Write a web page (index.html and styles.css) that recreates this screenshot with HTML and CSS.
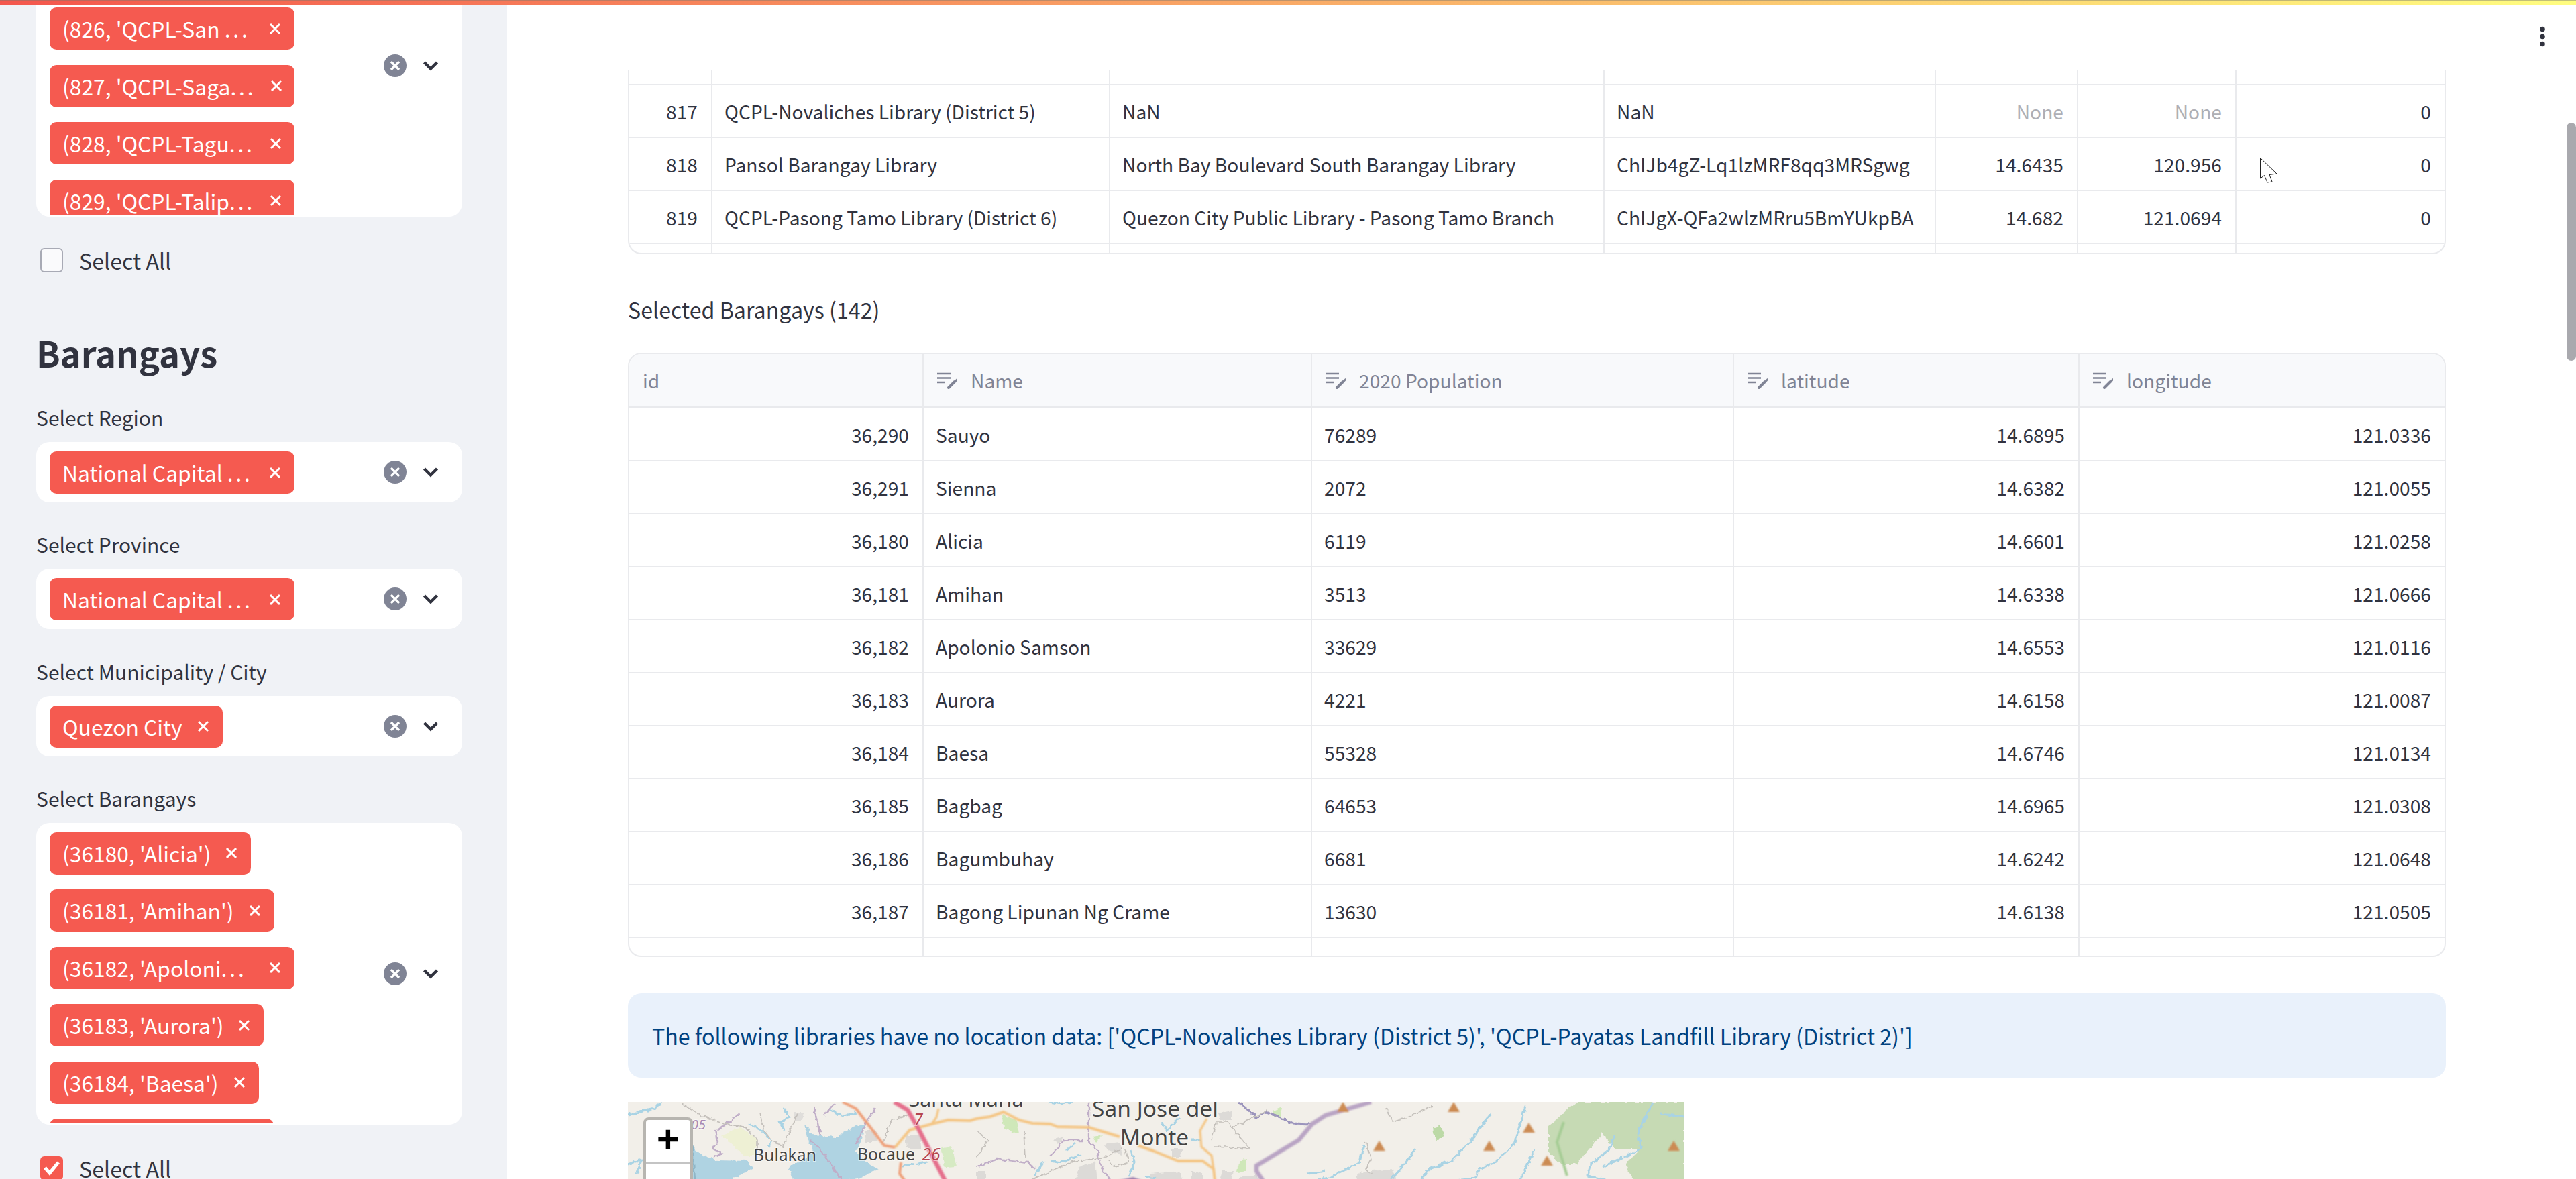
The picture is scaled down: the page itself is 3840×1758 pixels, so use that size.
FILE: index.html
```html
<!DOCTYPE html>
<html lang="en">
<head>
<meta charset="utf-8">
<title>Libraries and Barangays</title>
<link rel="stylesheet" href="styles.css">
</head>
<body>
<svg class="defs" width="0" height="0" aria-hidden="true">
  <symbol id="x" viewBox="0 0 18 18"><path d="M2 2L16 16M16 2L2 16" fill="none" stroke="currentColor" stroke-width="3"/></symbol>
  <symbol id="clear" viewBox="0 0 34 34"><circle cx="17" cy="17" r="17" fill="#808495"/><path d="M11 11L23 23M23 11L11 23" fill="none" stroke="#fff" stroke-width="3.4"/></symbol>
  <symbol id="chev" viewBox="0 0 24 16"><path d="M2.5 3L12 12.5L21.5 3" fill="none" stroke="#31333f" stroke-width="4.4"/></symbol>
  <symbol id="edit" viewBox="0 0 30 25"><path d="M0 2H20M0 8.5H20M0 15H12" fill="none" stroke="#808495" stroke-width="2.4"/><path d="M17 23L26 14" fill="none" stroke="#808495" stroke-width="4" stroke-linecap="round"/><path d="M28 12.5L30 10.5" fill="none" stroke="#808495" stroke-width="3" stroke-linecap="round"/></symbol>
</svg>

<div class="decoration"></div>

<aside class="sidebar">
  <div class="select select-tall select-scrolled">
    <div class="tags tags-scrolled">
      <div class="tag tag-wide"><span>(826, 'QCPL-San <span class="dots">...</span></span><svg class="tag-x"><use href="#x"/></svg></div>
      <div class="tag tag-wide"><span>(827, 'QCPL-Saga<span class="dots">...</span></span><svg class="tag-x"><use href="#x"/></svg></div>
      <div class="tag tag-wide"><span>(828, 'QCPL-Tagu<span class="dots">...</span></span><svg class="tag-x"><use href="#x"/></svg></div>
      <div class="tag tag-wide"><span>(829, 'QCPL-Talip<span class="dots">...</span></span><svg class="tag-x"><use href="#x"/></svg></div>
    </div>
    <div class="select-icons"><svg class="clear"><use href="#clear"/></svg><svg class="chev"><use href="#chev"/></svg></div>
  </div>
  <label class="check"><span class="box"></span>Select All</label>

  <h2 class="side-title">Barangays</h2>

  <div class="field">
    <div class="field-label">Select Region</div>
    <div class="select">
      <div class="tags"><div class="tag tag-wide"><span>National Capital <span class="dots">...</span></span><svg class="tag-x"><use href="#x"/></svg></div></div>
      <div class="select-icons"><svg class="clear"><use href="#clear"/></svg><svg class="chev"><use href="#chev"/></svg></div>
    </div>
  </div>
  <div class="field">
    <div class="field-label">Select Province</div>
    <div class="select">
      <div class="tags"><div class="tag tag-wide"><span>National Capital <span class="dots">...</span></span><svg class="tag-x"><use href="#x"/></svg></div></div>
      <div class="select-icons"><svg class="clear"><use href="#clear"/></svg><svg class="chev"><use href="#chev"/></svg></div>
    </div>
  </div>
  <div class="field">
    <div class="field-label">Select Municipality / City</div>
    <div class="select">
      <div class="tags"><div class="tag"><span>Quezon City</span><svg class="tag-x"><use href="#x"/></svg></div></div>
      <div class="select-icons"><svg class="clear"><use href="#clear"/></svg><svg class="chev"><use href="#chev"/></svg></div>
    </div>
  </div>
  <div class="field field-last">
    <div class="field-label">Select Barangays</div>
    <div class="select select-tall">
      <div class="tags">
        <div class="tag"><span>(36180, 'Alicia')</span><svg class="tag-x"><use href="#x"/></svg></div>
        <div class="tag"><span>(36181, 'Amihan')</span><svg class="tag-x"><use href="#x"/></svg></div>
        <div class="tag tag-wide"><span>(36182, 'Apoloni<span class="dots">...</span></span><svg class="tag-x"><use href="#x"/></svg></div>
        <div class="tag"><span>(36183, 'Aurora')</span><svg class="tag-x"><use href="#x"/></svg></div>
        <div class="tag"><span>(36184, 'Baesa')</span><svg class="tag-x"><use href="#x"/></svg></div>
        <div class="tag"><span>(36185, 'Bagbag')</span><svg class="tag-x"><use href="#x"/></svg></div>
      </div>
      <div class="select-icons"><svg class="clear"><use href="#clear"/></svg><svg class="chev"><use href="#chev"/></svg></div>
    </div>
  </div>
  <label class="check"><span class="box box-on"><svg class="tick" viewBox="0 0 34 34"><path d="M7 17L14 25L27 9" fill="none" stroke="#fff" stroke-width="5"/></svg></span>Select All</label>
</aside>

<main class="main">
  <div class="grid grid-clipped">
    <table class="data t-lib">
      <colgroup><col class="l1"><col class="l2"><col class="l3"><col class="l4"><col class="l5"><col class="l6"><col></colgroup>
      <tbody>
        <tr class="stub-top"><td></td><td></td><td></td><td></td><td></td><td></td><td></td></tr>
        <tr><td class="num">817</td><td>QCPL-Novaliches Library (District 5)</td><td>NaN</td><td>NaN</td><td class="num none">None</td><td class="num none">None</td><td class="num">0</td></tr>
        <tr><td class="num">818</td><td>Pansol Barangay Library</td><td>North Bay Boulevard South Barangay Library</td><td>ChIJb4gZ-Lq1lzMRF8qq3MRSgwg</td><td class="num">14.6435</td><td class="num">120.956</td><td class="num">0</td></tr>
        <tr><td class="num">819</td><td>QCPL-Pasong Tamo Library (District 6)</td><td>Quezon City Public Library - Pasong Tamo Branch</td><td>ChIJgX-QFa2wlzMRru5BmYUkpBA</td><td class="num">14.682</td><td class="num">121.0694</td><td class="num">0</td></tr>
        <tr class="stub-bottom"><td></td><td></td><td></td><td></td><td></td><td></td><td></td></tr>
      </tbody>
    </table>
  </div>

  <p class="caption">Selected Barangays (142)</p>

  <div class="grid grid-full">
    <table class="data t-bar">
      <colgroup><col class="b1"><col class="b2"><col class="b3"><col class="b4"><col></colgroup>
      <thead>
        <tr>
          <th>id</th>
          <th><span class="th-in"><svg class="edit"><use href="#edit"/></svg>Name</span></th>
          <th><span class="th-in"><svg class="edit"><use href="#edit"/></svg>2020 Population</span></th>
          <th><span class="th-in"><svg class="edit"><use href="#edit"/></svg>latitude</span></th>
          <th><span class="th-in"><svg class="edit"><use href="#edit"/></svg>longitude</span></th>
        </tr>
      </thead>
      <tbody>
        <tr><td class="num">36,290</td><td>Sauyo</td><td>76289</td><td class="num">14.6895</td><td class="num">121.0336</td></tr>
        <tr><td class="num">36,291</td><td>Sienna</td><td>2072</td><td class="num">14.6382</td><td class="num">121.0055</td></tr>
        <tr><td class="num">36,180</td><td>Alicia</td><td>6119</td><td class="num">14.6601</td><td class="num">121.0258</td></tr>
        <tr><td class="num">36,181</td><td>Amihan</td><td>3513</td><td class="num">14.6338</td><td class="num">121.0666</td></tr>
        <tr><td class="num">36,182</td><td>Apolonio Samson</td><td>33629</td><td class="num">14.6553</td><td class="num">121.0116</td></tr>
        <tr><td class="num">36,183</td><td>Aurora</td><td>4221</td><td class="num">14.6158</td><td class="num">121.0087</td></tr>
        <tr><td class="num">36,184</td><td>Baesa</td><td>55328</td><td class="num">14.6746</td><td class="num">121.0134</td></tr>
        <tr><td class="num">36,185</td><td>Bagbag</td><td>64653</td><td class="num">14.6965</td><td class="num">121.0308</td></tr>
        <tr><td class="num">36,186</td><td>Bagumbuhay</td><td>6681</td><td class="num">14.6242</td><td class="num">121.0648</td></tr>
        <tr><td class="num">36,187</td><td>Bagong Lipunan Ng Crame</td><td>13630</td><td class="num">14.6138</td><td class="num">121.0505</td></tr>
        <tr class="stub-end"><td></td><td></td><td></td><td></td><td></td></tr>
      </tbody>
    </table>
  </div>

  <div class="info">The following libraries have no location data: ['QCPL-Novaliches Library (District 5)', 'QCPL-Payatas Landfill Library (District 2)']</div>

  <div class="map">
    <svg class="map-svg" viewBox="0 0 1575 118" preserveAspectRatio="none">
      <defs>
        <filter id="soft" x="-2%" y="-5%" width="104%" height="110%"><feGaussianBlur stdDeviation="0.8"/></filter>
        <filter id="wiggle" x="-2%" y="-10%" width="104%" height="120%">
          <feTurbulence type="fractalNoise" baseFrequency="0.14" numOctaves="2" seed="4" result="n"/>
          <feDisplacementMap in="SourceGraphic" in2="n" scale="7" xChannelSelector="R" yChannelSelector="G"/>
          <feGaussianBlur stdDeviation="0.7"/>
        </filter>
      </defs>
      <rect width="1575" height="118" fill="#f2efe9"/>
      <g filter="url(#wiggle)">
        <path d="M1413 0L1372 37L1372 73L1390 93L1413 93L1453 47L1470 70L1510 70L1487 93L1499 118L1575 118L1575 0Z" fill="#c6dab4"/>
        <path d="M140 50L167 37L193 57L190 80L173 80Z" fill="#eef0d4"/>
        <g fill="#dcdad7">
          <path d="M667 118L673 97L697 90L700 118Z"/>
          <path d="M710 63L733 60L737 80L717 73Z"/>
          <path d="M780 107L823 103L827 118L777 118Z"/>
          <path d="M880 17L900 13L900 27L883 27Z"/>
          <path d="M840 103L857 107L857 118L840 118Z"/>
          <path d="M887 103L903 103L900 118L883 118Z"/>
          <path d="M913 110L940 110L940 118L910 118Z"/>
          <path d="M520 103L533 103L533 118L520 118Z"/>
          <path d="M633 57L647 53L643 63Z"/>
          <path d="M810 70L827 70L823 83L810 83Z"/>
          <path d="M353 43L370 43L372 60L355 60Z"/>
          <path d="M413 50L437 50L438 70L415 70Z"/>
          <path d="M247 15L262 15L260 28L248 28Z" opacity=".8"/>
          <path d="M1090 105L1140 100L1145 118L1085 118Z"/>
        </g>
        <g fill="#cfe8b9">
          <path d="M558 20L580 27L583 47L560 40Z"/>
          <path d="M960 13L975 7L973 22L963 22Z"/>
          <path d="M910 90L922 85L922 103L908 105Z"/>
          <path d="M693 53L707 50L697 60Z"/>
          <path d="M467 67L483 65L490 97L472 98Z" opacity=".8"/>
          <path d="M1200 40L1212 36L1218 52L1204 58Z" fill="#bcd9a6"/>
        </g>
        <g fill="#afd3e2">
          <path d="M95 67L113 80L133 87L180 88L187 100L147 118L95 118Z"/>
          <path d="M263 33L277 50L310 53L337 37L353 33L347 60L340 73L353 87L373 100L347 113L320 118L247 118L240 97L277 77L267 53Z"/>
        </g>
        <path d="M95 65L100 118" stroke="#8fb6c7" stroke-width="3" fill="none"/>
        <g fill="none" stroke="#a9d3e4" stroke-width="3" stroke-linejoin="round">
          <path d="M1287 17L1252 63L1229 87L1195 100L1180 118"/>
          <path d="M1338 6L1321 63L1292 90L1269 100L1263 113L1229 118"/>
          <path d="M1174 70L1160 90L1143 110L1137 118"/>
          <path d="M1097 63L1091 90L1045 113L1020 118"/>
          <path d="M1352 70L1338 100L1329 118"/>
          <path d="M1470 50L1464 70L1435 93L1430 110L1465 118"/>
          <path d="M1528 0L1505 47L1510 70L1453 97"/>
          <path d="M1540 18L1575 22"/>
          <path d="M1013 107L1040 103"/>
          <path d="M50 0L40 10L23 13L0 20"/>
          <path d="M0 93L20 87L13 107"/>
          <path d="M180 33L200 43L213 57L210 67"/>
          <path d="M233 10L240 23L227 30L233 43"/>
          <path d="M300 10L320 22L340 15"/>
          <path d="M410 95L447 90"/>
          <path d="M750 72L755 90L747 110"/>
          <path d="M653 73L667 62"/>
          <path d="M630 87L647 90L675 78"/>
          <path d="M607 110L620 88"/>
          <path d="M797 30L803 43L822 23"/>
          <path d="M840 57L853 57"/>
          <path d="M770 110L787 113"/>
          <path d="M627 0L647 3L663 0"/>
        </g>
        <g fill="none" stroke="#c0aec8" stroke-width="2.400">
          <path d="M167 17L133 43"/>
          <path d="M130 43L133 60L127 70L140 77L127 83"/>
          <path d="M273 57L287 70L307 100L320 117"/>
          <path d="M370 10L357 27L340 63"/>
          <path d="M277 7L283 33L287 50"/>
          <path d="M307 3L293 20"/>
          <path d="M687 0L687 57L700 73L703 93L720 118"/>
          <path d="M520 97L550 85L597 90L607 100"/>
          <path d="M630 80L650 57L680 57"/>
        </g>
        <path d="M910 0L937 23L953 15L990 32L1020 33" fill="none" stroke="#9b94bc" stroke-width="3"/>
        <g fill="none" stroke="#c4c0bb" stroke-width="1.600">
          <path d="M80 3L110 20L143 33L173 37L193 57L193 73"/>
          <path d="M197 17L203 43L217 60L233 67"/>
          <path d="M253 17L230 70"/>
          <path d="M380 60L393 27L423 17"/>
          <path d="M600 117L660 90L713 82L737 68"/>
          <path d="M717 87L723 97L747 90L740 70"/>
          <path d="M875 67L927 70L893 30L877 30L870 57"/>
          <path d="M903 37L953 13"/>
          <path d="M590 43L592 83"/>
          <path d="M520 43L537 57L520 83"/>
          <path d="M1100 60L1108 85L1100 100L1110 108"/>
          <path d="M1130 8L1140 30L1165 22L1200 6"/>
        </g>
      </g>
      <g filter="url(#soft)">
        <path d="M1108 0L1040 20L1020 33L1000 57L970 75L937 95L937 103L947 118" fill="none" stroke="#b9a4c4" stroke-width="6.500"/>
        <path d="M727 118L753 112L770 118Z" fill="#9f84b0"/>
        <path d="M1395 30L1385 60L1400 110" fill="none" stroke="#a5cc94" stroke-width="4"/>
        <g fill="none" stroke-linejoin="round">
          <path d="M398 68L420 42L453 33L477 27L510 28L520 25L540 22L560 15L583 27L603 32L630 33L640 37L687 38L733 52M760 65L783 73L820 88L857 88L873 100L875 118" stroke="#f4c583" stroke-width="4"/>
          <path d="M863 25L853 43L855 67L870 80L873 100M463 10L460 23L453 33" stroke="#f4c583" stroke-width="3.200"/>
          <path d="M320 0L340 10L363 40L382 65L398 68M407 90L405 107L413 118" stroke="#ee9f78" stroke-width="4"/>
          <path d="M397 0L417 12L433 40L450 73L473 118" stroke="#e5708c" stroke-width="6.500"/>
        </g>
        <g fill="#cc8b52">
          <path d="M1066 0L1075 15L1057 15Z"/>
          <path d="M1231 0L1240 15L1222 15Z"/>
          <path d="M1343 31L1352 46L1334 46Z"/>
          <path d="M1120 58L1129 73L1111 73Z"/>
          <path d="M1284 58L1293 73L1275 73Z"/>
          <path d="M1370 80L1379 95L1361 95Z"/>
          <path d="M1559 58L1568 73L1550 73Z"/>
        </g>
      </g>
      <g class="map-labels">
        <text class="lb lb-s" x="504" y="7">Santa Maria</text>
        <text class="lb lb-l" x="786" y="22">San Jose del</text>
        <text class="lb lb-l" x="785" y="65">Monte</text>
        <text class="lb lb-m" x="234" y="88">Bulakan</text>
        <text class="lb lb-m" x="385" y="87">Bocaue</text>
        <text class="lb lb-r" x="452" y="87">26</text>
        <text class="lb lb-r" x="433" y="35">7</text>
        <text class="lb lb-p" x="105" y="41">05</text>
      </g>
    </svg>
    <div class="zoom-ctl">
      <div class="zoom-btn zoom-in">+</div>
      <div class="zoom-btn">&#8722;</div>
    </div>
  </div>

  <svg class="kebab" viewBox="0 0 10 32"><circle cx="5" cy="4.500" r="3.800"/><circle cx="5" cy="15.500" r="3.800"/><circle cx="5" cy="26.500" r="3.800"/></svg>
  <div class="scroll-thumb"></div>
  <svg class="cursor" viewBox="0 0 26 38"><path d="M0.500 0.500L0.500 31L6.500 26.500L11 37L18 36L14 25.500L25 24Z" fill="#fff" stroke="#222" stroke-width="1"/></svg>
</main>
</body>
</html>
```

FILE: styles.css
```css
* { box-sizing: border-box; }
html, body { margin: 0; height: 1758px; overflow: hidden; background: #fff; }
body {
  display: flex;
  font-family: "Noto Sans CJK SC", "Source Sans Pro", "Noto Sans", sans-serif;
  color: #31333f;
}
.defs { position: absolute; }

.decoration {
  position: fixed; top: 0; left: 0; right: 0; height: 7px; z-index: 5;
  background: linear-gradient(90deg, #f4574d, #fffd80);
  border-top: 1px solid rgba(120, 120, 110, .45);
}

/* sidebar */
.sidebar {
  flex: 0 0 756px;
  height: 1758px;
  overflow: hidden;
  background: #f0f2f6;
  padding: 0 67px 0 54px;
}
.select {
  display: flex;
  justify-content: space-between;
  height: 90px;
  padding: 14px 0 2px 20px;
  background: #fff;
  border-radius: 20px;
}
.select-tall { height: 450px; }
.select-scrolled { margin-top: -127px; padding-top: 0; }
.tags {
  display: flex; flex-direction: column; align-items: flex-start; gap: 22.500px;
  overflow: hidden; flex: 0 0 auto;
}
.tags-scrolled { padding-top: 138px; }
.tag {
  flex: 0 0 63px;
  display: flex; align-items: center; justify-content: space-between; gap: 22px;
  padding: 0 20px 0 19px;
  background: #f55a50; color: #fff;
  border-radius: 10px;
  font-size: 31.800px; line-height: 63px; white-space: nowrap;
}
.tag-wide { width: 365px; }
.dots { letter-spacing: .12em; }
.tag-x { width: 18px; height: 18px; flex: none; color: #fff; }
.select-icons { display: flex; align-items: center; gap: 24px; padding-right: 35px; margin-top: -14px; height: 90px; }
.select-scrolled .select-icons { margin-top: 0; }
.select-tall .select-icons { height: 450px; }
.clear { width: 34px; height: 34px; }
.chev { width: 24px; height: 16px; }

.check { display: flex; align-items: center; gap: 24px; margin: 47px 0 0 6px; height: 36px; font-size: 32.200px; line-height: 36px; }
.box { width: 34px; height: 36px; background: #fafafc; border: 2px solid #a8aab5; border-radius: 6px; }
.box-on { background: #f55a50; border: 0; }
.tick { display: block; width: 34px; height: 34px; }

.side-title { margin: 84px 0 46px 0; font-size: 52.500px; line-height: 70px; font-weight: 600; }
.field { margin-bottom: 46.300px; }
.field-last { margin-bottom: 0; }
.field-label { height: 36px; margin: -2px 0 19px 0; font-size: 30px; line-height: 36px; }

/* main */
.main {
  position: relative;
  flex: 1;
  min-width: 0;
  height: 1758px;
  overflow: hidden;
  padding: 105px 194px 0 180px;
}
.grid { border: 2px solid #e9eaed; overflow: hidden; }
.grid-clipped { height: 274px; border-top: 0; border-radius: 0 0 20px 20px; }
.grid-full { height: 901px; border-radius: 20px; }
.data { width: 100%; table-layout: fixed; border-collapse: separate; border-spacing: 0; font-size: 28.200px; }
.data td, .data th {
  box-sizing: border-box;
  height: 79px;
  padding: 0 20px 0 18px;
  line-height: 40px;
  font-weight: 400;
  text-align: left;
  white-space: nowrap;
  overflow: hidden;
  border-right: 2px solid #e9eaed;
  border-bottom: 2px solid #e9eaed;
}
.data td:last-child, .data th:last-child { border-right: 0; }
.data th { height: 81px; padding-left: 20px; background: #f8f9fb; color: #808495; border-bottom-width: 3px; }
.data td.num { text-align: right; }
.data td.none { color: #aeafb5; }
.stub-top td { height: 22px !important; }
.stub-bottom td, .stub-end td { height: 26px !important; border-bottom: 0 !important; }
.th-in { display: flex; align-items: center; gap: 20px; }
.edit { width: 30px; height: 25px; flex: none; }

.l1 { width: 124px; } .l2 { width: 593px; } .l3 { width: 737px; } .l4 { width: 494px; } .l5 { width: 212px; } .l6 { width: 236px; }
.b1 { width: 439px; } .b2 { width: 579px; } .b3 { width: 629px; } .b4 { width: 515px; }

.caption { margin: 57px 0 40px; font-size: 32.200px; line-height: 50px; }
.info {
  margin-top: 54px;
  height: 126px;
  padding: 0 36px;
  display: flex; align-items: center;
  background: #e9f1fb;
  color: #004280;
  border-radius: 20px;
  font-size: 32.200px;
  white-space: nowrap;
}
.map { position: relative; margin-top: 36px; width: 1575px; height: 118px; overflow: hidden; }
.map-svg { display: block; width: 1575px; height: 118px; }
.lb { text-anchor: middle; font-family: "Noto Sans", sans-serif; fill: #444; paint-order: stroke; stroke: rgba(255,255,255,.55); stroke-width: 2px; }
.lb-s { font-size: 30.500px; }
.lb-l { font-size: 33.500px; }
.lb-m { font-size: 24.700px; }
.lb-r { font-size: 24.700px; fill: #b5454f; font-style: italic; }
.lb-p { font-size: 20px; fill: #a78bb5; font-style: italic; }

.zoom-ctl {
  position: absolute; left: 23px; top: 23px; width: 74px;
  border: 4px solid #b7b5b0; border-radius: 8px; overflow: hidden; background: #fff;
}
.zoom-btn {
  height: 66px; padding-top: 4px; display: flex; align-items: center; justify-content: center;
  font-family: "Liberation Mono", monospace; font-weight: 700; font-size: 58px; color: #000;
}
.zoom-in { border-bottom: 3px solid #c4c4c4; }

.kebab { position: absolute; top: 39px; left: 3029px; width: 10px; height: 32px; fill: #31333f; }
.scroll-thumb { position: absolute; top: 183px; right: 0; width: 14px; height: 355px; border-radius: 7px; background: #a9a9ae; }
.cursor { position: absolute; top: 235px; left: 2613px; width: 26px; height: 38px; }
```
